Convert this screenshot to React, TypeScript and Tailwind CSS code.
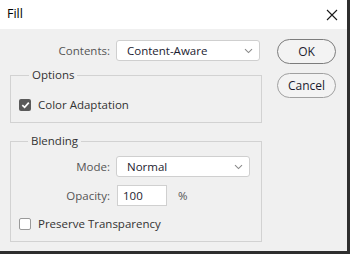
import React from "react";

function Chevron() {
  return (
    <svg width="9" height="6" viewBox="0 0 9 6" className="shrink-0">
      <path d="M1 1.2 L4.5 4.6 L8 1.2" fill="none" stroke="#8a8a8a" strokeWidth="1.1" />
    </svg>
  );
}

function Select({ value, width }: { value: string; width: string }) {
  return (
    <div
      className={`${width} h-[21px] bg-white border border-[#cfcfcf] rounded-[3px] flex items-center justify-between pl-[10px] pr-[6px] text-[#1c1c30]`}
    >
      <span>{value}</span>
      <Chevron />
    </div>
  );
}

function CheckBox({ checked }: { checked: boolean }) {
  if (checked) {
    return (
      <div className="w-[12px] h-[12px] rounded-[2px] bg-[#5a5a5a] flex items-center justify-center shrink-0">
        <svg width="9" height="8" viewBox="0 0 9 8">
          <path d="M1.3 4.2 L3.6 6.3 L7.8 1.6" fill="none" stroke="#ffffff" strokeWidth="1.7" />
        </svg>
      </div>
    );
  }
  return <div className="w-[12px] h-[12px] rounded-[2px] bg-white border border-[#9a9a9a] shrink-0" />;
}

export default function App() {
  return (
    <div
      className="w-[350px] h-[254px] bg-[#f0f0f0] border-r-[3px] border-b-[3px] border-[#2e2e2e] flex flex-col text-[11.5px] text-[#3a3a3a] overflow-hidden"
      style={{ fontFamily: '"Open Sans", "Noto Sans", Arial, sans-serif' }}
    >
      {/* Title bar */}
      <div className="h-[29px] bg-white flex items-center justify-between pl-[7px] pr-[9px] shrink-0">
        <span className="text-[12.5px] text-black">Fill</span>
        <svg width="12" height="12" viewBox="0 0 12 12">
          <path d="M1 1 L11 11 M11 1 L1 11" stroke="#1a1a1a" strokeWidth="1.1" fill="none" />
        </svg>
      </div>

      {/* Body */}
      <div className="flex flex-row flex-1">
        {/* Left column */}
        <div className="w-[262px] pl-[10px] pt-[11px] flex flex-col">
          <div className="flex items-center gap-[6px] h-[21px]">
            <span className="w-[100px] text-right text-[#555]">Contents:</span>
            <Select value="Content-Aware" width="w-[144px]" />
          </div>

          <fieldset className="mt-[6px] border border-[#d2d2d2] pb-[9px]">
            <legend className="ml-[18px] px-[3px] leading-[16px] text-[#333]">Options</legend>
            <div className="flex items-center gap-[7px] pl-[8px] pt-[14px] h-[30px] text-[#333]">
              <CheckBox checked />
              <span>Color Adaptation</span>
            </div>
          </fieldset>

          <fieldset className="mt-[10px] border border-[#d2d2d2] pb-[9px]">
            <legend className="ml-[17px] px-[3px] leading-[16px] text-[#333]">Blending</legend>
            <div className="flex flex-col pt-[7px]">
              <div className="flex items-center gap-[6px] h-[21px]">
                <span className="w-[99px] text-right text-[#555]">Mode:</span>
                <Select value="Normal" width="w-[134px]" />
              </div>
              <div className="flex items-center h-[21px] mt-[8px]">
                <span className="w-[99px] text-right text-[#555]">Opacity:</span>
                <div className="ml-[7px] w-[50px] h-[21px] bg-white border border-[#d0d0d0] flex items-center pl-[5px] text-[#1c1c30]">
                  100
                </div>
                <span className="ml-[11px] text-[#555]">%</span>
              </div>
              <div className="flex items-center gap-[7px] pl-[8px] mt-[10px] h-[16px] text-[#333]">
                <CheckBox checked={false} />
                <span>Preserve Transparency</span>
              </div>
            </div>
          </fieldset>
        </div>

        {/* Right column */}
        <div className="flex flex-col pl-[15px] pt-[10px] gap-[9px]">
          <button className="w-[59px] h-[25px] rounded-full border border-[#7c7c7c] bg-[#f3f3f3] text-[#1c1c30] text-[12px] flex items-center justify-center">
            OK
          </button>
          <button className="w-[59px] h-[25px] rounded-full border border-[#a0a0a0] bg-[#f3f3f3] text-[#1c1c30] text-[12px] flex items-center justify-center">
            Cancel
          </button>
        </div>
      </div>
    </div>
  );
}
